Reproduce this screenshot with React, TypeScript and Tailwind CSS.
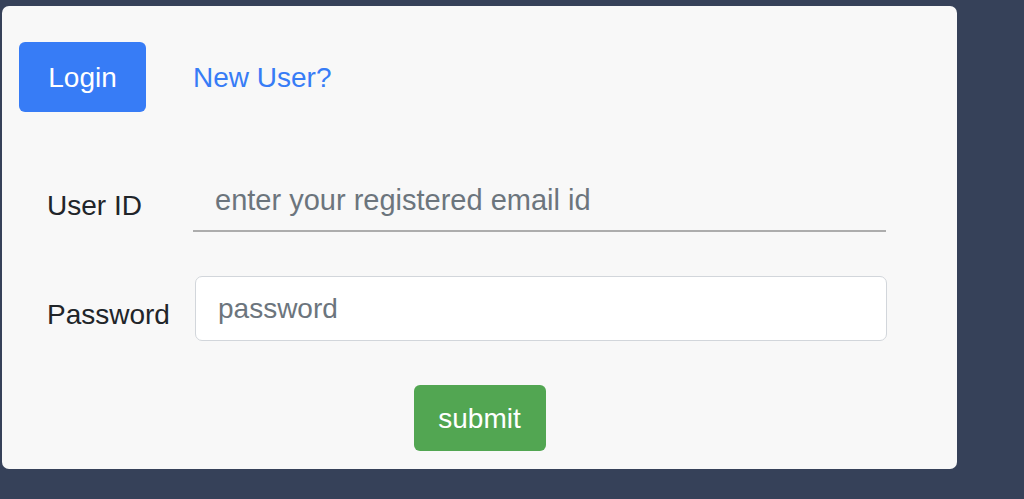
import React from "react";

const font = { fontFamily: '"Liberation Sans", Arial, sans-serif' };

export default function App() {
  return (
    <div
      className="w-[1024px] h-[499px] bg-[#364159] pl-[2px] pt-[6px] overflow-hidden"
      style={font}
    >
      <div className="w-[955px] h-[463px] bg-[#f8f8f8] rounded-[7px] flex flex-col pl-[17px] pt-[36px]">
        {/* Tabs */}
        <div className="flex items-center gap-[47px]">
          <button className="w-[127px] h-[70px] rounded-[6px] bg-[#377cf6] text-white text-[28px] flex items-center justify-center pt-[2px]">
            Login
          </button>
          <a className="text-[28px] text-[#377cf6] cursor-pointer pt-[2px]">New User?</a>
        </div>

        {/* User ID */}
        <div className="flex items-center mt-[56px] pl-[28px]">
          <label className="w-[146px] text-[28px] text-[#212529] pt-[11px]">User ID</label>
          <input
            className="w-[693px] h-[64px] bg-transparent border-b-2 border-[#adadad] pl-[22px] pt-[2px] text-[29px] outline-none placeholder:text-[#6c757d]"
            placeholder="enter your registered email id"
          />
        </div>

        {/* Password */}
        <div className="flex items-center mt-[44px] pl-[28px]">
          <label className="w-[148px] text-[28px] text-[#212529] pt-[13px]">Password</label>
          <input
            type="password"
            className="w-[692px] h-[65px] bg-white border border-[#d2d6db] rounded-[7px] pl-[22px] pt-[1px] text-[28px] outline-none placeholder:text-[#6c757d]"
            placeholder="password"
          />
        </div>

        {/* Submit */}
        <div className="flex justify-center mt-[44px] pr-[17px]">
          <button className="w-[132px] h-[66px] rounded-[6px] bg-[#52a652] text-white text-[28px] flex items-center justify-center pt-[1px]">
            submit
          </button>
        </div>
      </div>
    </div>
  );
}
